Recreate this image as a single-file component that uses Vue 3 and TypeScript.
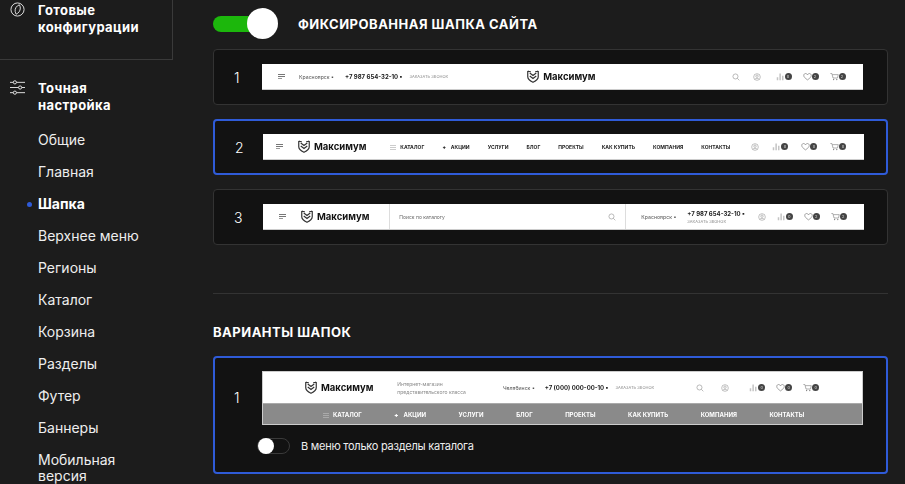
<script setup lang="ts">
const menu = [
  { title: 'Общие' },
  { title: 'Главная' },
  { title: 'Шапка', active: true },
  { title: 'Верхнее меню' },
  { title: 'Регионы' },
  { title: 'Каталог' },
  { title: 'Корзина' },
  { title: 'Разделы' },
  { title: 'Футер' },
  { title: 'Баннеры' },
  { title: 'Мобильная версия' },
]

const navItems = ['Услуги', 'Блог', 'Проекты', 'Как купить', 'Компания', 'Контакты']
</script>

<template>
  <svg class="defs" width="0" height="0" aria-hidden="true">
    <symbol id="logo" viewBox="0 0 24 26" preserveAspectRatio="none">
      <path d="M1.500 2c2.500 1.200 4 1.500 6 1.200M22.500 2c-2.500 1.200-4 1.500-6 1.200M1.500 2v11.500c0 5 5 8.500 10.500 11 5.500-2.500 10.500-6 10.500-11V2" fill="none" stroke="currentColor" stroke-width="2.400" />
      <path d="M5.500 6l6.500 5 6.500-5M5.500 12l6.500 5 6.500-5" fill="none" stroke="currentColor" stroke-width="2.400" />
    </symbol>
    <symbol id="search" viewBox="0 0 12 12">
      <circle cx="5.200" cy="5.200" r="3.800" fill="none" stroke="currentColor" />
      <path d="M8 8l3 3" stroke="currentColor" />
    </symbol>
    <symbol id="user" viewBox="0 0 12 12">
      <circle cx="6" cy="6" r="5" fill="none" stroke="currentColor" stroke-width=".9" />
      <circle cx="6" cy="4.800" r="1.800" fill="none" stroke="currentColor" stroke-width=".9" />
      <path d="M2.800 9.500c1-2 5.400-2 6.400 0" fill="none" stroke="currentColor" stroke-width=".9" />
    </symbol>
    <symbol id="bars" viewBox="0 0 12 12">
      <path d="M1 11V7h2v4zM4.500 11V2h2v9zM8 11V5h2v6z" fill="#c4c4c4" />
    </symbol>
    <symbol id="heart" viewBox="0 0 12 12">
      <path d="M6 10.500C2.500 8 1 6.500 1 4.500 1 3 2.200 2 3.400 2 4.500 2 5.500 2.700 6 3.700 6.500 2.700 7.500 2 8.600 2 9.800 2 11 3 11 4.500c0 2-1.500 3.500-5 6z" fill="none" stroke="#777" stroke-width=".9" />
    </symbol>
    <symbol id="cart" viewBox="0 0 12 12">
      <path d="M.5 2h2l1.500 6h6l1-4.500H3" fill="none" stroke="#888" stroke-width=".9" />
      <circle cx="4.800" cy="10" r=".9" fill="#888" />
      <circle cx="9" cy="10" r=".9" fill="#888" />
    </symbol>
  </svg>

  <div class="page">
    <aside class="sidebar">
      <div class="config">
        <svg class="side-icon" viewBox="0 0 16 16">
          <circle cx="8" cy="8" r="7" fill="none" stroke="currentColor" />
          <path d="M10 3C7 4 5 7 5.500 10c.2 1.200.8 2.200 1 3 2.500-1 4.500-3.500 4.500-6.500 0-1.500-.5-2.700-1-3.500z" fill="none" stroke="currentColor" />
        </svg>
        <span>Готовые конфигурации</span>
      </div>
      <div class="tuning">
        <svg class="side-icon" viewBox="0 0 16 16">
          <path d="M0 2.500h3.500M7 2.500h9M0 8h9M12.500 8H16M0 13.500h3.500M7 13.500h9" stroke="currentColor" />
          <circle cx="5.200" cy="2.500" r="1.700" fill="none" stroke="currentColor" />
          <circle cx="10.800" cy="8" r="1.700" fill="none" stroke="currentColor" />
          <circle cx="5.200" cy="13.500" r="1.700" fill="none" stroke="currentColor" />
        </svg>
        <span>Точная настройка</span>
      </div>
      <ul class="menu">
        <li v-for="item in menu" :key="item.title" :class="{ active: item.active }">{{ item.title }}</li>
      </ul>
    </aside>

    <main class="content">
      <div class="fixed-head">
        <div class="big-toggle"><span class="big-knob"></span></div>
        <h2>Фиксированная шапка сайта</h2>
      </div>

      <div class="options">
        <div class="card">
          <span class="num">1</span>
          <div class="preview p1">
            <span class="burger"></span>
            <span class="city">Красноярск ▪</span>
            <span class="phone">+7 987 654-32-10 ▪</span>
            <span class="callback">Заказать звонок</span>
            <span class="brand"><svg class="logo"><use href="#logo" /></svg>Максимум</span>
            <svg class="ic search"><use href="#search" /></svg>
            <svg class="ic user"><use href="#user" /></svg>
            <span class="counter"><svg class="ic"><use href="#bars" /></svg><i>0</i></span>
            <span class="counter"><svg class="ic"><use href="#heart" /></svg><i>2</i></span>
            <span class="counter"><svg class="ic"><use href="#cart" /></svg><i>2</i></span>
          </div>
        </div>

        <div class="card selected">
          <span class="num">2</span>
          <div class="preview p2">
            <span class="burger"></span>
            <span class="brand"><svg class="logo"><use href="#logo" /></svg>Максимум</span>
            <div class="nav">
              <span><b class="cat"></b>Каталог</span>
              <span><b class="plus">+</b>Акции</span>
              <span v-for="n in navItems" :key="n">{{ n }}</span>
            </div>
            <svg class="ic user"><use href="#user" /></svg>
            <span class="counter"><svg class="ic"><use href="#bars" /></svg><i>0</i></span>
            <span class="counter"><svg class="ic"><use href="#heart" /></svg><i>0</i></span>
            <span class="counter"><svg class="ic"><use href="#cart" /></svg><i>0</i></span>
          </div>
        </div>

        <div class="card">
          <span class="num">3</span>
          <div class="preview p3">
            <span class="burger"></span>
            <span class="brand"><svg class="logo"><use href="#logo" /></svg>Максимум</span>
            <div class="search-box">
              <span>Поиск по каталогу</span>
              <svg class="ic search"><use href="#search" /></svg>
            </div>
            <span class="city">Красноярск ▪</span>
            <div class="phone-col">
              <span class="phone">+7 987 654-32-10 ▪</span>
              <span class="callback">Заказать звонок</span>
            </div>
            <svg class="ic user"><use href="#user" /></svg>
            <span class="counter"><svg class="ic"><use href="#bars" /></svg><i>0</i></span>
            <span class="counter"><svg class="ic"><use href="#heart" /></svg><i>2</i></span>
            <span class="counter"><svg class="ic"><use href="#cart" /></svg><i>2</i></span>
          </div>
        </div>
      </div>

      <hr class="divider" />

      <h3>Варианты шапок</h3>

      <div class="card selected wide">
        <span class="num">1</span>
        <div class="wide-body">
          <div class="preview-two">
            <div class="preview p4">
              <span class="brand"><svg class="logo"><use href="#logo" /></svg>Максимум</span>
              <span class="tagline">Интернет-магазин<br />представительского класса</span>
              <span class="city">Челябинск ▪</span>
              <span class="phone">+7 (000) 000-00-10 ▪</span>
              <span class="callback">Заказать звонок</span>
              <svg class="ic search"><use href="#search" /></svg>
              <svg class="ic user"><use href="#user" /></svg>
              <span class="counter"><svg class="ic"><use href="#bars" /></svg><i>0</i></span>
              <span class="counter"><svg class="ic"><use href="#heart" /></svg><i>0</i></span>
              <span class="counter"><svg class="ic"><use href="#cart" /></svg><i>0</i></span>
            </div>
            <div class="nav grey">
              <span><b class="cat"></b>Каталог</span>
              <span><b class="plus">+</b>Акции</span>
              <span v-for="n in navItems" :key="n">{{ n }}</span>
            </div>
          </div>
          <div class="small-option">
            <div class="small-toggle"><span class="small-knob"></span></div>
            <span>В меню только разделы каталога</span>
          </div>
        </div>
      </div>
    </main>
  </div>
</template>

<style scoped>
.defs {
  position: absolute;
}

.page {
  display: flex;
  height: 484px;
  overflow: hidden;
  background: #1c1c1c;
  color: #fff;
  font-family: Inter, "Noto Sans", sans-serif;
}

.sidebar {
  flex: 0 0 173px;
}

.side-icon {
  flex: 0 0 15px;
  width: 15px;
  height: 15px;
  margin: 0 13px 0 10px;
  color: #e6e6e6;
}

.config {
  display: flex;
  align-items: flex-start;
  height: 58px;
  padding-top: 1px;
  border-right: 1px solid #3a3a3a;
  border-bottom: 1px solid #3a3a3a;
  font-size: 13px;
  font-weight: 700;
  line-height: 17px;
  letter-spacing: 0.4px;
}

.config .side-icon {
  margin-top: 1px;
}

.config span {
  width: 120px;
  padding-top: 1px;
}

.tuning {
  display: flex;
  align-items: flex-start;
  padding-top: 20px;
  font-size: 13px;
  font-weight: 700;
  line-height: 17px;
  letter-spacing: 0.4px;
}

.tuning span {
  width: 90px;
}

.menu {
  list-style: none;
  margin: 18px 0 0;
  padding: 0 0 0 38px;
  font-size: 14px;
  line-height: 16px;
  color: #eee;
}

.menu li {
  position: relative;
  width: 108px;
  margin-bottom: 16px;
}

.menu li.active {
  color: #fff;
  font-weight: 700;
}

.menu li.active::before {
  content: '';
  position: absolute;
  left: -11px;
  top: 6px;
  width: 5px;
  height: 5px;
  border-radius: 50%;
  background: #2f5bd8;
}

.content {
  flex: 0 0 675px;
  margin-left: 40px;
}

.fixed-head {
  display: flex;
  align-items: center;
  gap: 20px;
  height: 49px;
  padding-bottom: 2px;
  box-sizing: border-box;
}

.big-toggle {
  position: relative;
  width: 65px;
  height: 16px;
}

.big-toggle::before {
  content: '';
  position: absolute;
  left: 0;
  top: 0;
  width: 40px;
  height: 16px;
  border-radius: 8px 0 0 8px;
  background: #1cb70c;
}

.big-knob {
  position: absolute;
  left: 34px;
  top: -8px;
  width: 31px;
  height: 31px;
  border-radius: 50%;
  background: #fff;
}

h2,
h3 {
  margin: 0;
  font-size: 13px;
  font-weight: 700;
  text-transform: uppercase;
  letter-spacing: 0.5px;
}

.options {
  display: flex;
  flex-direction: column;
  gap: 14px;
}

.card {
  display: flex;
  align-items: center;
  height: 56px;
  padding-left: 20px;
  box-sizing: border-box;
  border: 1px solid #333;
  border-radius: 4px;
  background: #121212;
}

.card.selected {
  padding-left: 20px;
  border: 2px solid #2f5bd8;
}

.num {
  flex: 0 0 28px;
  font-size: 14px;
  font-weight: 300;
}

.preview {
  display: flex;
  align-items: center;
  flex: 0 0 601px;
  height: 26px;
  box-sizing: border-box;
  background: #fff;
  color: #222;
  border-bottom: 1px solid #ccc;
  filter: blur(0.35px);
}

.burger {
  width: 7px;
  height: 5px;
  background:
    linear-gradient(#777 1px, transparent 1px 2px, #777 2px 3px) 0 0 / 7px 3px no-repeat,
    linear-gradient(#999, #999) 0 4px / 4px 1px no-repeat;
}

.city {
  font-size: 5.200px;
  color: #555;
  white-space: nowrap;
}

.phone {
  font-size: 6px;
  font-weight: 700;
  color: #222;
  white-space: nowrap;
}

.callback {
  font-size: 4px;
  color: #888;
  text-transform: uppercase;
  white-space: nowrap;
}

.brand {
  display: flex;
  align-items: center;
  gap: 4px;
  font-size: 9.500px;
  font-weight: 700;
  color: #111;
}

.logo {
  width: 12px;
  height: 13px;
  color: #333;
}

.ic {
  width: 8px;
  height: 8px;
  color: #999;
}

.counter {
  display: flex;
  align-items: center;
}

.counter .ic {
  width: 9px;
  height: 9px;
}

.counter i {
  width: 7px;
  height: 7px;
  border-radius: 50%;
  background: #444;
  color: #ddd;
  font-size: 4px;
  font-style: normal;
  line-height: 7px;
  text-align: center;
}

.nav {
  display: flex;
  align-items: center;
  font-size: 5px;
  font-weight: 700;
  text-transform: uppercase;
  white-space: nowrap;
}

.cat {
  display: inline-block;
  width: 6px;
  height: 5px;
  margin-right: 4px;
  vertical-align: -1px;
  background: linear-gradient(#ccc 1px, transparent 1px 2px, #ccc 2px 3px, transparent 3px 4px, #ccc 4px 5px);
}

.plus {
  margin-right: 5px;
}

.p1 {
  padding-left: 16px;
}

.p1 .city {
  margin-left: 14px;
}

.p1 .phone {
  margin-left: 11px;
}

.p1 .callback {
  margin-left: 7px;
}

.p1 .brand {
  margin-left: 79px;
}

.p1 .search {
  margin-left: 136px;
}

.p1 .user {
  margin: 0 4px 0 13px;
}

.p1 .counter {
  margin-left: 11px;
}

.p2 {
  padding-left: 13px;
}

.p2 .brand {
  margin-left: 15px;
}

.p2 .nav {
  gap: 18px;
  margin-left: 24px;
}

.p2 .user {
  margin-left: 21px;
}

.p2 .counter {
  margin-left: 13px;
}

.p3 {
  margin-left: 1px;
  padding-left: 16px;
}

.p3 .brand {
  margin-left: 15px;
}

.search-box {
  display: flex;
  align-items: center;
  justify-content: space-between;
  width: 237px;
  height: 100%;
  margin-left: 20px;
  padding: 0 9px;
  box-sizing: border-box;
  border-left: 1px solid #ddd;
  border-right: 1px solid #ddd;
  font-size: 5px;
  color: #666;
}

.p3 .city {
  margin-left: 15px;
}

.phone-col {
  display: flex;
  flex-direction: column;
  gap: 2px;
  margin-left: 11px;
}

.p3 .user {
  margin-left: 13px;
}

.p3 .counter {
  margin-left: 11px;
}

.wide {
  align-items: flex-start;
  height: 118px;
  margin-top: 16px;
}

.card.wide {
  padding-left: 19px;
}

.wide .num {
  margin-top: 31px;
}

.wide-body {
  display: flex;
  flex-direction: column;
  margin-top: 13px;
}

.preview-two {
  width: 601px;
  border: 1px solid #ccc;
  box-sizing: border-box;
  filter: blur(0.35px);
}

.p4 {
  height: 31px;
  border: 0;
  padding-left: 42px;
  filter: none;
}

.p4 .tagline {
  margin-left: 24px;
  font-size: 5px;
  line-height: 8px;
  color: #888;
  white-space: nowrap;
}

.p4 .city {
  margin-left: 37px;
}

.p4 .phone {
  margin-left: 10px;
}

.p4 .callback {
  margin-left: 7px;
}

.p4 .search {
  margin-left: 42px;
}

.p4 .user {
  margin: 0 9px 0 17px;
}

.p4 .counter {
  margin-left: 11px;
}

.grey {
  gap: 32.500px;
  height: 20px;
  padding-left: 60px;
  border-top: 1px solid #aaa;
  background: #8a8a8a;
  color: #fff;
  font-size: 6px;
}

.grey .cat {
  background: linear-gradient(#aaa 1px, transparent 1px 2px, #aaa 2px 3px, transparent 3px 4px, #aaa 4px 5px);
}

.small-option {
  display: flex;
  align-items: center;
  gap: 11px;
  margin: 13px 0 0 -5px;
  font-size: 11px;
  letter-spacing: -0.25px;
  color: #eee;
}

.small-toggle {
  position: relative;
  width: 31px;
  height: 14px;
  border: 1px solid #3a3a3a;
  border-radius: 8px;
}

.small-knob {
  position: absolute;
  left: 0;
  top: -1px;
  width: 16px;
  height: 16px;
  border-radius: 50%;
  background: #fff;
}

.divider {
  height: 1px;
  margin: 48px 0 0;
  border: 0;
  background: #333;
}

h3 {
  margin-top: 30px;
  line-height: 16px;
}
</style>

<style>
body {
  margin: 0;
  background: #1c1c1c;
  overflow: hidden;
}
</style>
